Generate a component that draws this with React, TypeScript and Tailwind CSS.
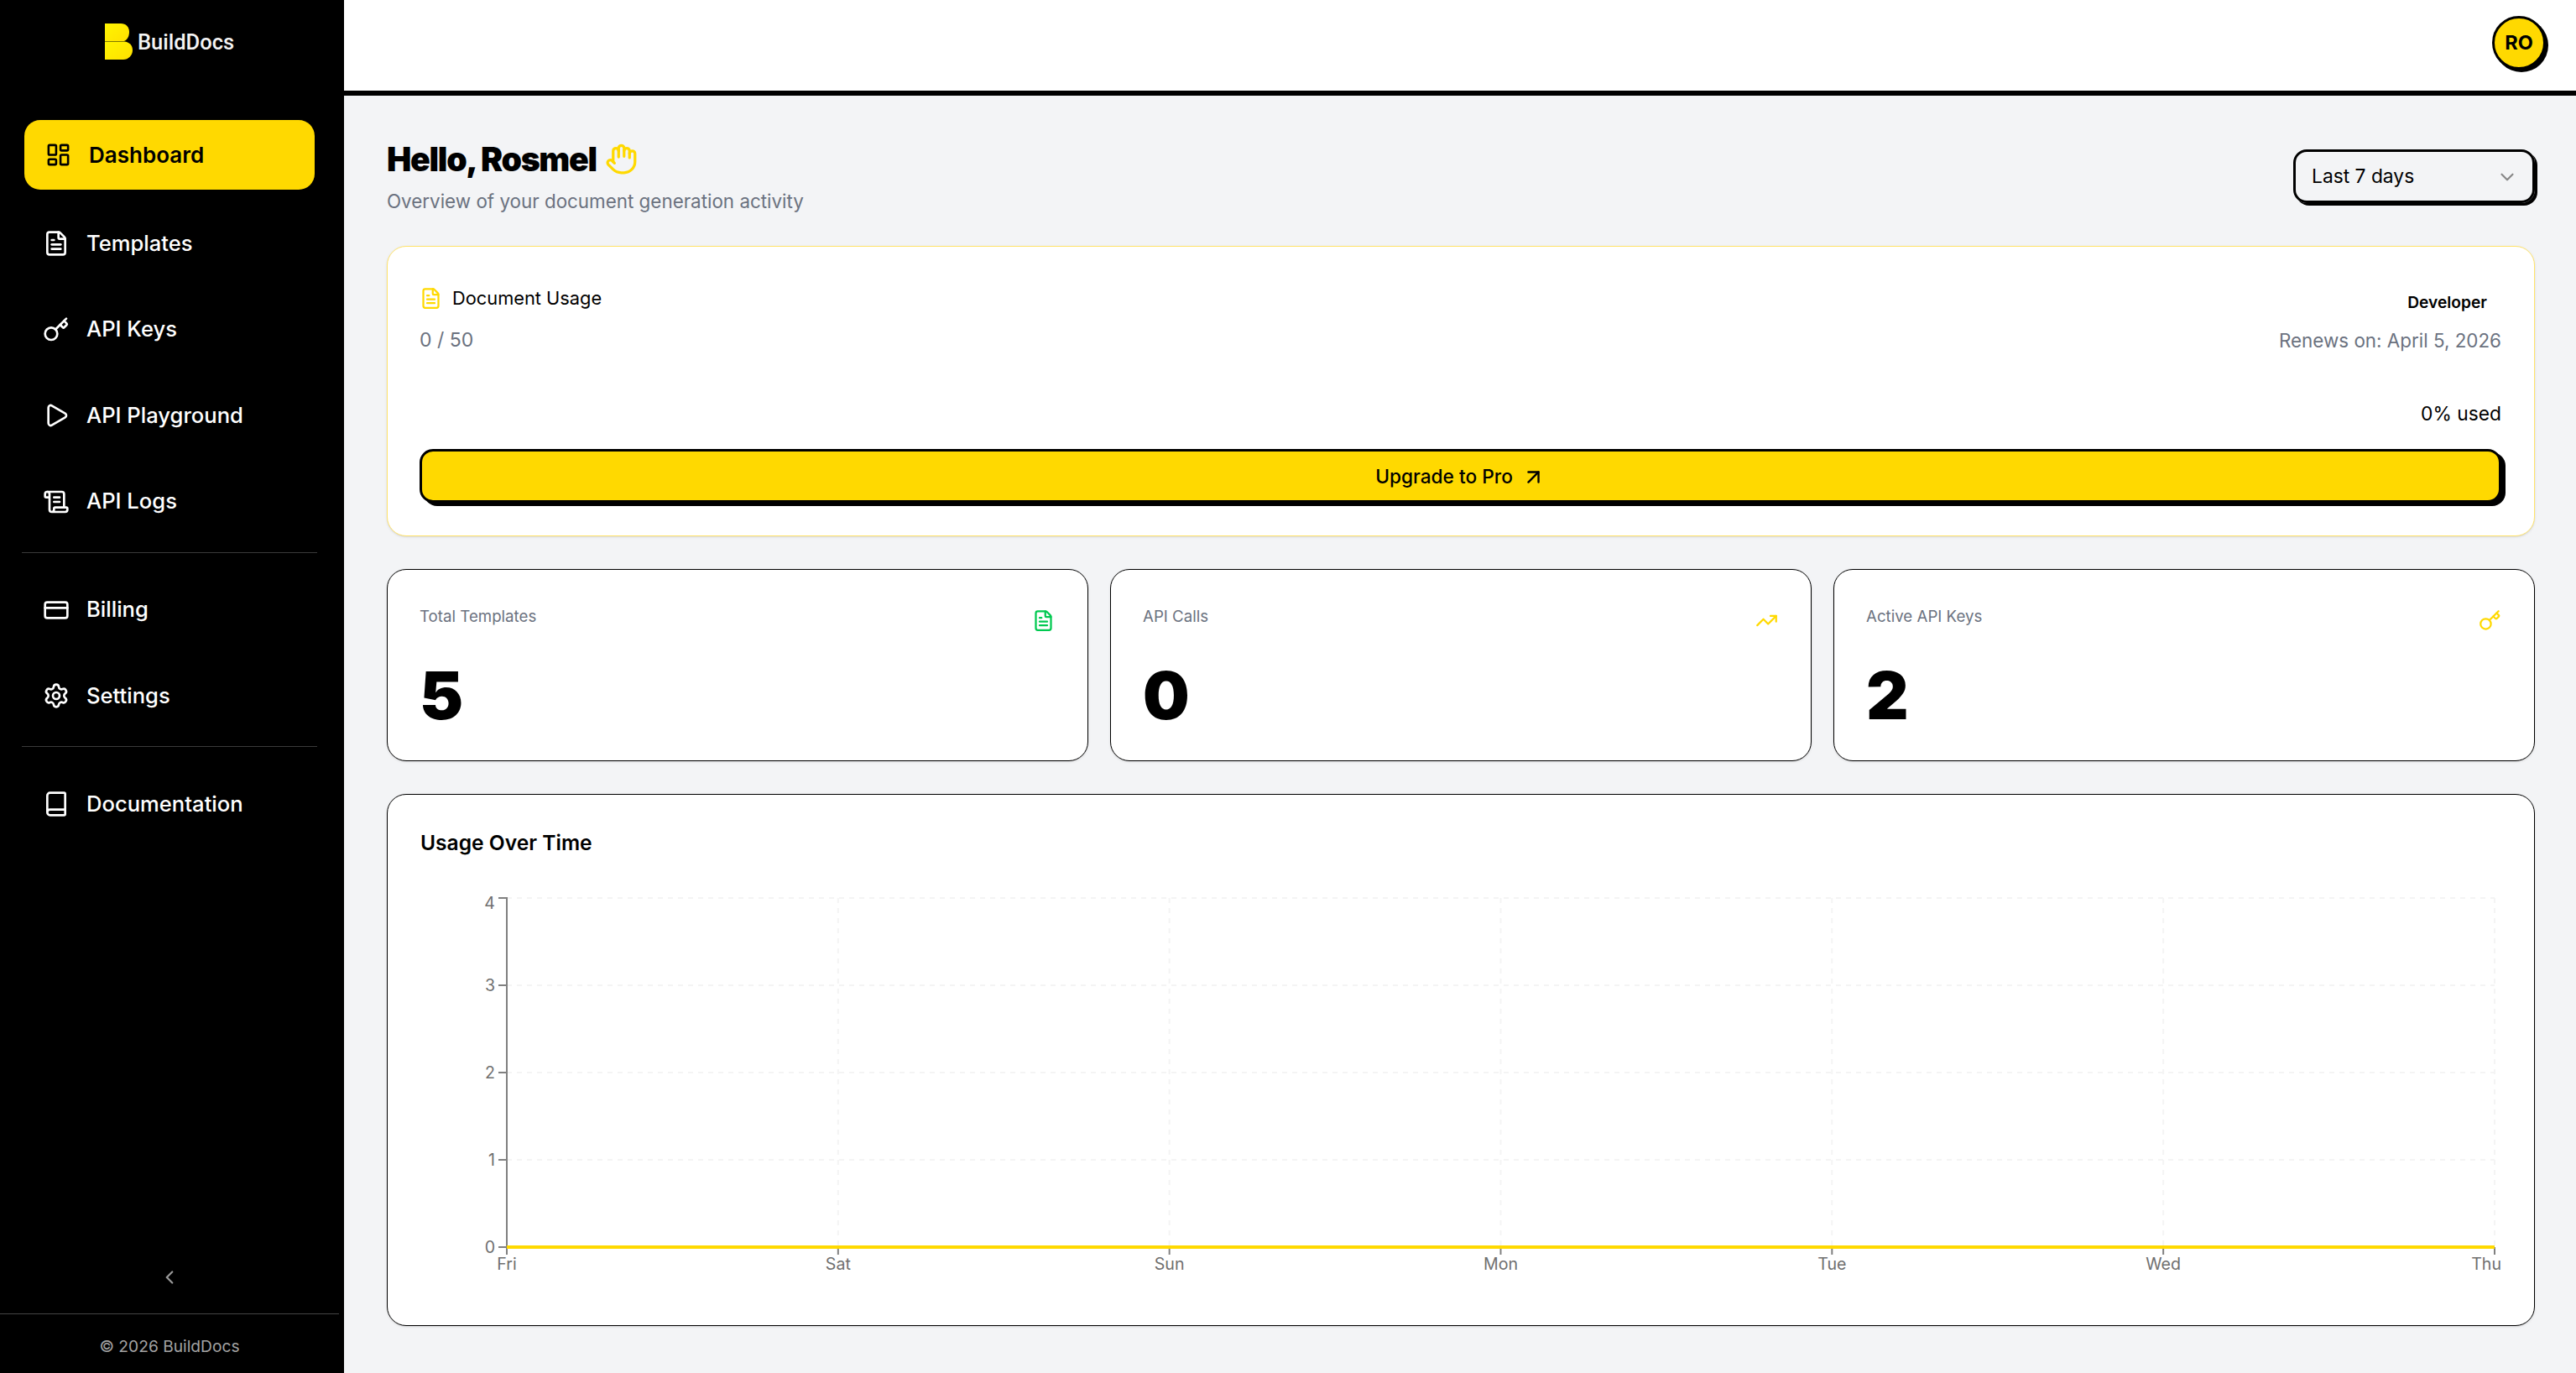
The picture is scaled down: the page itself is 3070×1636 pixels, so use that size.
import { ArrowUpRight, Book, ChevronDown, ChevronLeft, CreditCard, FileText, Hand, Key, LayoutDashboard, Play, ScrollText, Settings, TrendingUp } from 'lucide-react';
import type { ReactNode } from 'react';

function NavItem({ icon, label }: { icon: ReactNode; label: string }) {
  return (
    <a className="flex h-[78px] items-center gap-[20px] px-[25px] text-[25.6px] font-medium text-white">
      {icon}
      <span>{label}</span>
    </a>
  );
}

function Sidebar() {
  return (
    <aside className="flex h-full w-[410px] shrink-0 flex-col border-r-[6px] border-black bg-black">
      {/* Logo */}
      <div className="flex h-[143px] items-start justify-center gap-[6px] pt-[28px]">
        <svg width="33" height="43" viewBox="0 0 33 43">
          <defs>
            <linearGradient id="logoFill" x1="0" y1="0" x2="1" y2="1">
              <stop offset="0" stopColor="#FFF500" />
              <stop offset="1" stopColor="#FFE000" />
            </linearGradient>
          </defs>
          <path d="M0 0H19C25 0 29 4 29 10C29 15 27 19 23 21H0Z" fill="url(#logoFill)" />
          <path d="M0 21.6H23C29 22 33 26 33 32C33 38 28 43 22 43H0Z" fill="url(#logoFill)" />
        </svg>
        <span className="mt-[4px] font-['Roboto',sans-serif] text-[25.5px] leading-[36px] font-medium text-[#f4f4f4]">BuildDocs</span>
      </div>

      <nav className="flex flex-col px-[26px]">
        <a className="mx-[3px] mb-[25px] flex h-[83px] items-center gap-[21px] rounded-[19px] bg-[#FFD900] px-[25px] text-[26px] font-semibold text-black">
          <LayoutDashboard size={31} />
          <span>Dashboard</span>
        </a>
        <div className="flex flex-col gap-[24.5px]">
          <NavItem icon={<FileText size={32} />} label="Templates" />
          <NavItem icon={<Key size={32} />} label="API Keys" />
          <NavItem icon={<Play size={32} />} label="API Playground" />
          <NavItem icon={<ScrollText size={32} />} label="API Logs" />
        </div>
        <div className="mt-[21px] mb-[29px] h-px bg-[#3a3a3a]" />
        <div className="flex flex-col gap-[24.5px]">
          <NavItem icon={<CreditCard size={32} />} label="Billing" />
          <NavItem icon={<Settings size={32} />} label="Settings" />
        </div>
        <div className="mt-[21px] mb-[29px] h-px bg-[#3a3a3a]" />
        <NavItem icon={<Book size={32} />} label="Documentation" />
      </nav>

      <div className="mt-auto flex justify-center pb-[30px] text-[#9a9a9a]">
        <ChevronLeft size={26} />
      </div>
      <div className="flex h-[71px] items-center justify-center border-t border-[#444444] pt-[7px] text-[19.2px] text-[#a3a3a3]">
        © 2026 BuildDocs
      </div>
    </aside>
  );
}

function StatCard({ label, value, icon }: { label: string; value: string; icon: ReactNode }) {
  return (
    <div className="h-[229px] rounded-[23px] border border-black bg-white pt-[40px] pr-[39px] pl-[38px] shadow-sm">
      <div className="flex items-start justify-between">
        <span className="mt-[2px] text-[18.7px] leading-[28px] text-[#6b7280]">{label}</span>
        <span className="mt-[7px]">{icon}</span>
      </div>
      <div className="mt-[37px] text-[78.3px] leading-[78px] font-black text-black">{value}</div>
    </div>
  );
}

const yTicks = [
  { label: '4', y: 20, base: 33 },
  { label: '3', y: 124, base: 131 },
  { label: '2', y: 228, base: 235 },
  { label: '1', y: 332, base: 339 },
  { label: '0', y: 436, base: 443 },
];
const xTicks = ['Fri', 'Sat', 'Sun', 'Mon', 'Tue', 'Wed', 'Thu'];
const xPos = (i: number) => 103 + i * 394.83;

function UsageChart() {
  return (
    <svg width="2480" height="491" viewBox="0 0 2480 491" className="block font-['Inter',sans-serif]">
      {yTicks.slice(0, 4).map((t) => (
        <line key={t.label} x1="103" x2="2472" y1={t.y} y2={t.y} stroke="#f4f4f4" strokeWidth="2" strokeDasharray="6 6" />
      ))}
      {xTicks.slice(1).map((d, i) => (
        <line key={d} x1={xPos(i + 1)} x2={xPos(i + 1)} y1="20" y2="436" stroke="#f4f4f4" strokeWidth="2" strokeDasharray="6 6" />
      ))}
      <line x1="103" x2="103" y1="19" y2="445" stroke="#808080" strokeWidth="2" />
      {yTicks.map((t) => (
        <g key={t.label}>
          <line x1="93" x2="103" y1={t.y} y2={t.y} stroke="#808080" strokeWidth="2" />
          <text x="89" y={t.base} textAnchor="end" fontSize="19.6" fill="#6f6f6f">
            {t.label}
          </text>
        </g>
      ))}
      {xTicks.map((d, i) => (
        <g key={d}>
          <line x1={xPos(i)} x2={xPos(i)} y1="436" y2="445" stroke="#808080" strokeWidth="2" />
          <text x={i === 6 ? 2480 : xPos(i)} y="463" textAnchor={i === 6 ? 'end' : 'middle'} fontSize="19.6" fill="#6f6f6f">
            {d}
          </text>
        </g>
      ))}
      <line x1="103" x2="2472" y1="436" y2="436" stroke="#FFD900" strokeWidth="4" />
    </svg>
  );
}

export default function App() {
  return (
    <div className="flex h-screen w-screen overflow-hidden bg-[#f3f4f6] font-['Inter','Noto_Sans',sans-serif]">
      <Sidebar />
      <main className="flex min-w-0 flex-1 flex-col">
        <header className="flex h-[114px] shrink-0 items-start justify-end border-b-[6px] border-black bg-white pt-[19px] pr-[36px]">
          <div className="flex h-[64px] w-[64px] items-center justify-center rounded-full border-[3px] border-black bg-[#FFD900] text-[23.5px] font-bold text-black shadow-[3px_3px_0_0_#000]">
            RO
          </div>
        </header>

        <div className="flex flex-col pt-[52px] pr-[49px] pl-[51px]">
          <div className="flex items-start justify-between">
            <div>
              <h1 className="flex h-[47px] items-center gap-[10px] text-[39.2px] leading-[47px] font-black tracking-[-1.3px] text-black">
                Hello, Rosmel
                <Hand size={39} className="text-[#FFD900]" />
              </h1>
              <p className="mt-[10px] text-[22.4px] leading-[33px] text-[#6b7280]">Overview of your document generation activity</p>
            </div>
            <div className="mt-[12px] flex h-[64px] w-[288px] items-center justify-between rounded-[16px] border-[3px] border-black pt-[1px] pr-[17px] pl-[19px] shadow-[3px_3px_0_0_#000]">
              <span className="text-[22.8px] text-black">Last 7 days</span>
              <ChevronDown size={26} className="text-[#888888]" />
            </div>
          </div>

          {/* Document usage */}
          <section className="mt-[37px] h-[346px] rounded-[23px] border border-[#FFE36B] bg-white pt-[38px] pr-[39px] pl-[38px] shadow-sm">
            <div className="flex items-start justify-between">
              <div>
                <div className="flex h-[47px] items-center gap-[12px] text-[21.8px] text-black">
                  <FileText size={27} className="text-[#FFD900]" />
                  Document Usage
                </div>
                <div className="mt-[10px] text-[23px] leading-[33px] text-[#6b7280]">0 / 50</div>
              </div>
              <div className="flex flex-col items-end">
                <span className="mt-[14px] mr-[17px] text-[19.2px] leading-[28px] font-semibold text-black">Developer</span>
                <span className="mt-[15px] text-[22.4px] leading-[33px] text-[#6b7280]">Renews on: April 5, 2026</span>
              </div>
            </div>
            <div className="mt-[54px] text-right text-[22.8px] leading-[33px] text-black">0% used</div>
            <button className="mt-[26px] flex h-[64px] w-full items-center justify-center gap-[10px] rounded-[16px] border-[3px] border-black bg-[#FFD900] pt-[2px] text-[22.7px] font-medium text-black shadow-[5px_4px_0_0_#000]">
              Upgrade to Pro
              <ArrowUpRight size={29} />
            </button>
          </section>

          <div className="mt-[39px] grid grid-cols-3 gap-[26px]">
            <StatCard label="Total Templates" value="5" icon={<FileText size={27} className="text-[#00c950]" />} />
            <StatCard label="API Calls" value="0" icon={<TrendingUp size={27} className="text-[#FFD900]" />} />
            <StatCard label="Active API Keys" value="2" icon={<Key size={27} className="text-[#FFD900]" />} />
          </div>

          <section className="mt-[39px] h-[634px] rounded-[23px] border border-black bg-white pt-[34px] pr-[39px] pl-[39px] shadow-sm">
            <h2 className="text-[24.6px] leading-[46px] font-semibold text-black">Usage Over Time</h2>
            <div className="mt-[23px]">
              <UsageChart />
            </div>
          </section>
        </div>
      </main>
    </div>
  );
}
